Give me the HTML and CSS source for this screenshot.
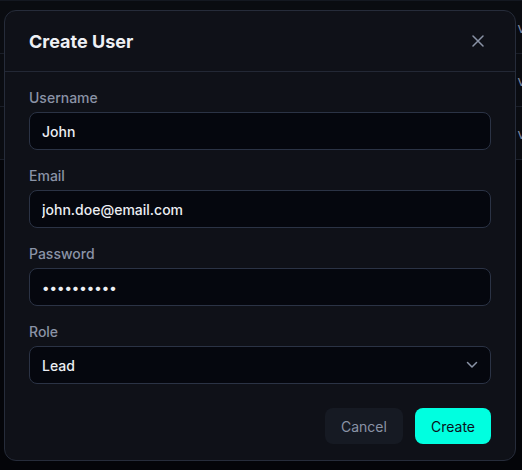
FILE: index.html
```html
<!DOCTYPE html>
<html lang="en">
<head>
  <meta charset="UTF-8">
  <title>Create User</title>
  <meta name="viewport" content="width=device-width, initial-scale=1.0">
  <link rel="stylesheet" href="styles.css">
</head>
<body>
  <!-- table of the page behind the dialog -->
  <div class="backdrop-table">
    <div class="row"><span class="cell-text">view</span></div>
    <div class="row"><span class="cell-text">view</span></div>
    <div class="row"><span class="cell-text">view</span></div>
  </div>

  <!-- Create user dialog -->
  <div class="modal">
    <div class="modal-header">
      <h2>Create User</h2>
      <button class="close-btn" aria-label="Close">
        <svg width="12" height="12" viewBox="0 0 12 12">
          <path d="M1 1L11 11M11 1L1 11" stroke="currentColor" stroke-width="1.5" stroke-linecap="round" fill="none"/>
        </svg>
      </button>
    </div>

    <div class="modal-body">
      <div class="field">
        <label for="username">Username</label>
        <input type="text" id="username" value="John">
      </div>
      <div class="field">
        <label for="email">Email</label>
        <input type="email" id="email" value="john.doe@email.com">
      </div>
      <div class="field">
        <label for="password">Password</label>
        <input type="password" id="password" value="secret1234">
      </div>
      <div class="field">
        <label for="role">Role</label>
        <div class="select-wrap">
          <select id="role">
            <option>Lead</option>
            <option>Member</option>
            <option>Admin</option>
          </select>
          <svg class="chevron" width="12" height="12" viewBox="0 0 12 12">
            <path d="M1.5 3.5L6 8L10.5 3.5" stroke="currentColor" stroke-width="1.5" stroke-linecap="round" stroke-linejoin="round" fill="none"/>
          </svg>
        </div>
      </div>
    </div>

    <div class="modal-footer">
      <button class="btn btn-cancel">Cancel</button>
      <button class="btn btn-create">Create</button>
    </div>
  </div>
</body>
</html>
```

FILE: styles.css
```css
* {
  box-sizing: border-box;
  font-family: 'Inter', 'Noto Sans', sans-serif;
}

body, html {
  margin: 0;
  padding: 0;
  height: 100%;
  overflow: hidden;
}

body {
  background: #040509;
  position: relative;
}

.backdrop-table {
  border-top: 1px solid #141821;
  background: #0a0c11;
}

.backdrop-table .row {
  height: 53px;
  border-bottom: 1px solid #1a1e28;
  display: flex;
  align-items: center;
  justify-content: flex-end;
}

.cell-text {
  font-size: 14px;
  color: #7f8aa3;
  margin-right: -26px;
}

.modal {
  position: absolute;
  top: 10px;
  left: 4px;
  width: 512px;
  background: #0f1118;
  border: 1px solid #262c3a;
  border-radius: 12px;
  color: #e9ebf0;
}

.modal-header {
  height: 61px;
  padding: 0 24px;
  display: flex;
  align-items: center;
  justify-content: space-between;
  border-bottom: 1px solid #232835;
}

.modal-header h2 {
  margin: 0;
  font-size: 18px;
  font-weight: 700;
  color: #eef0f4;
}

.close-btn {
  width: 28px;
  height: 28px;
  margin-right: -1px;
  border: none;
  background: transparent;
  color: #8a93a6;
  display: flex;
  align-items: center;
  justify-content: center;
  padding: 0;
  cursor: pointer;
}

.modal-body {
  padding: 16px 24px;
  display: flex;
  flex-direction: column;
  gap: 16px;
}

.field {
  display: flex;
  flex-direction: column;
  gap: 4px;
}

.field label {
  font-size: 14px;
  line-height: 20px;
  font-weight: 500;
  color: #8a93a6;
}

.field input,
.field select {
  width: 100%;
  height: 38px;
  padding: 0 12px;
  background: #05070e;
  border: 1px solid #2b3345;
  border-radius: 8px;
  color: #eceef3;
  font-size: 14px;
  font-weight: 500;
  outline: none;
}

.select-wrap {
  position: relative;
}

.field select {
  appearance: none;
  -webkit-appearance: none;
}

.chevron {
  position: absolute;
  right: 13px;
  top: 13px;
  color: #8a93a6;
  pointer-events: none;
}

.modal-footer {
  padding: 8px 24px 16px;
  display: flex;
  justify-content: flex-end;
  gap: 12px;
}

.btn {
  height: 36px;
  padding: 0 16px;
  border: none;
  border-radius: 8px;
  font-size: 14px;
  cursor: pointer;
}

.btn-cancel {
  background: #161a23;
  color: #8a93a6;
  min-width: 78px;
}

.btn-create {
  background: #00ffe0;
  color: #0b1220;
  min-width: 76px;
}
```
